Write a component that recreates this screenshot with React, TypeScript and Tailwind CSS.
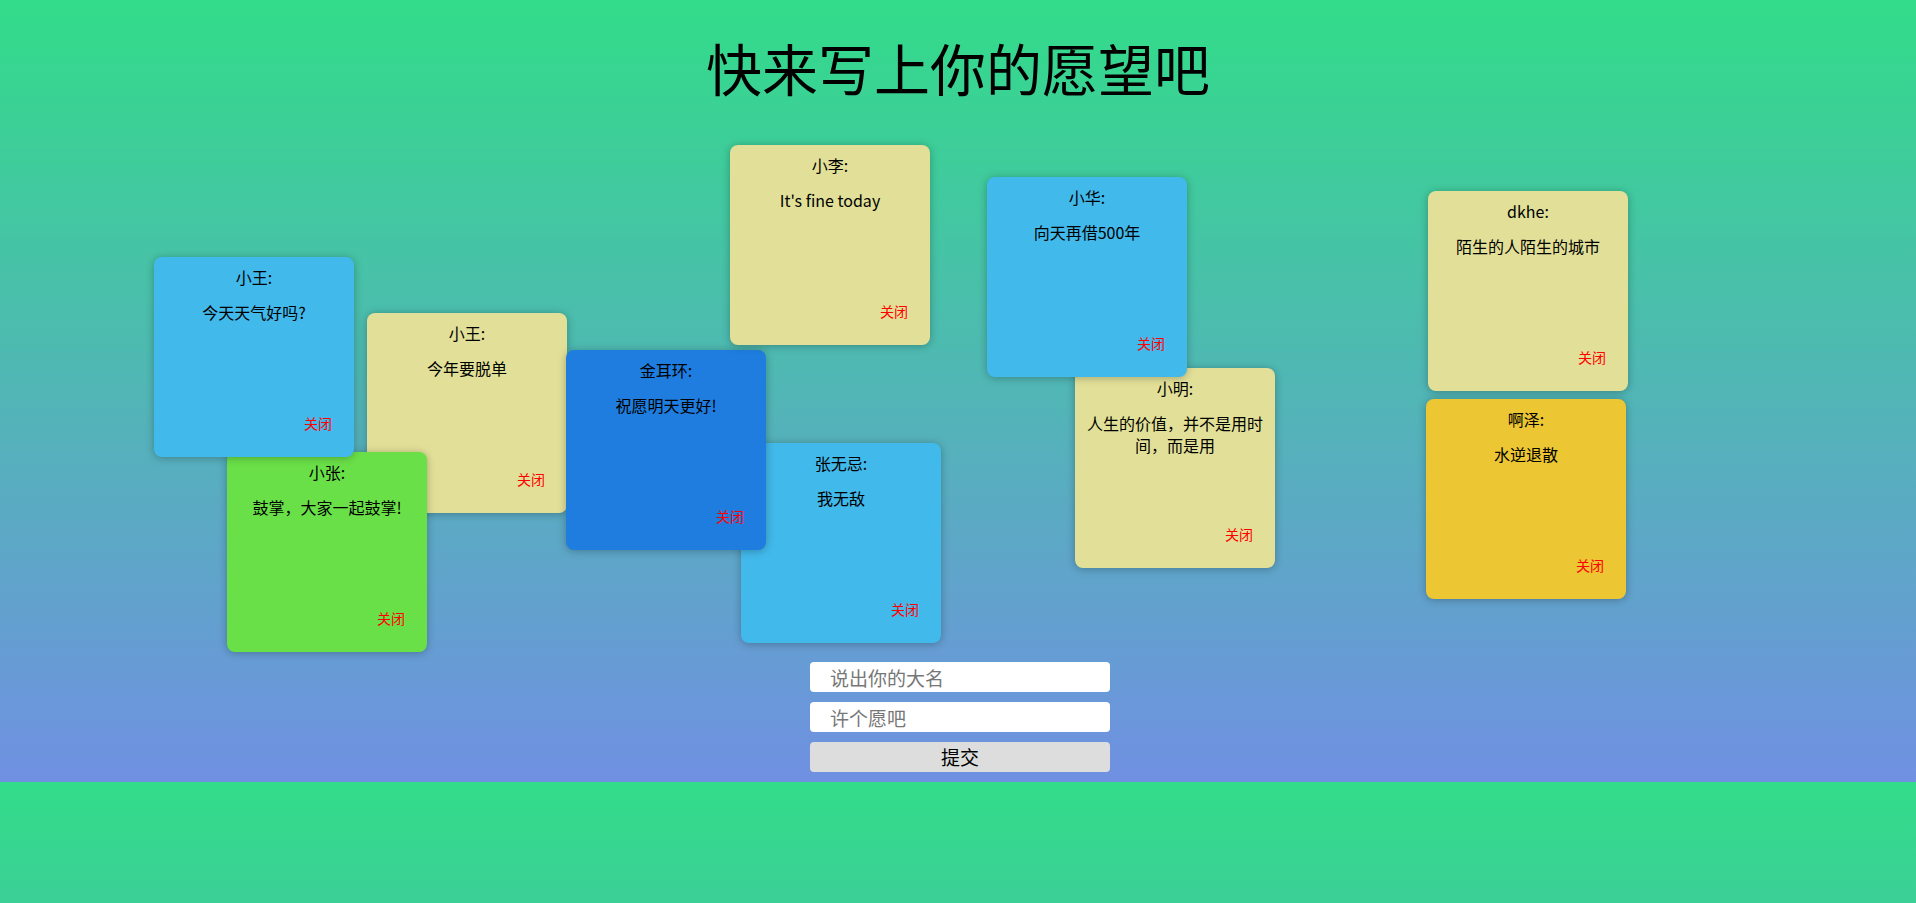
type Wish = {
  name: string;
  text: string;
  color: string;
  x: number;
  y: number;
};

// order matters: later notes sit on top of earlier ones
const wishes: Wish[] = [
  { name: "小王:", text: "今年要脱单", color: "bg-[#e2e098]", x: 367, y: 210 },
  { name: "小张:", text: "鼓掌，大家一起鼓掌!", color: "bg-[#6ae048]", x: 227, y: 349 },
  { name: "小王:", text: "今天天气好吗?", color: "bg-[#42b9eb]", x: 154, y: 154 },
  { name: "张无忌:", text: "我无敌", color: "bg-[#42b9eb]", x: 741, y: 340 },
  { name: "金耳环:", text: "祝愿明天更好!", color: "bg-[#1f7ddf]", x: 566, y: 247 },
  { name: "小明:", text: "人生的价值，并不是用时间，而是用", color: "bg-[#e2e098]", x: 1075, y: 265 },
  { name: "小华:", text: "向天再借500年", color: "bg-[#42b9eb]", x: 987, y: 74 },
  { name: "dkhe:", text: "陌生的人陌生的城市", color: "bg-[#e2e098]", x: 1428, y: 88 },
  { name: "啊泽:", text: "水逆退散", color: "bg-[#edc633]", x: 1426, y: 296 },
  { name: "小李:", text: "It's fine today", color: "bg-[#e2e098]", x: 730, y: 42 }
];

function WishCard({ wish }: { wish: Wish }) {
  return (
    <div
      className={`absolute flex h-[200px] w-[200px] flex-col rounded-[8px] px-[10px] pt-[9px] pb-[24px] text-center text-black shadow-[0_1px_8px_rgba(0,0,0,0.28)] ${wish.color}`}
      style={{ left: wish.x, top: wish.y }}
    >
      <p className="text-[16px] leading-[22px]">{wish.name}</p>
      <p className="mt-[13px] text-[16px] leading-[22px]">{wish.text}</p>
      <a className="mt-auto mr-[12px] cursor-pointer self-end text-[14px] leading-[20px] text-[#ff0000]">关闭</a>
    </div>
  );
}

export default function App() {
  return (
    <div
      className="min-h-screen bg-[linear-gradient(#32dc89,#7090e2)] bg-[length:100%_782px] bg-repeat-y"
      style={{ fontFamily: '"Noto Sans CJK SC", "Noto Sans", sans-serif' }}
    >
      <div className="h-[782px]">
        <h1 className="pt-[35px] pb-[4px] text-center text-[56px] leading-[64px] font-normal text-black">快来写上你的愿望吧</h1>

        <div className="relative h-[549px]">
          {wishes.map((w, i) => (
            <WishCard key={i} wish={w} />
          ))}
        </div>

        <div className="mt-[10px] flex justify-center pl-[4px]">
          <form className="flex w-[300px] flex-col gap-[10px]" onSubmit={(e) => e.preventDefault()}>
            <input
              type="text"
              placeholder="说出你的大名"
              className="h-[30px] rounded-[4px] bg-white pl-[20px] text-[19px] text-black outline-none placeholder:text-[#777777]"
            />
            <input
              type="text"
              placeholder="许个愿吧"
              className="h-[30px] rounded-[4px] bg-white pl-[20px] text-[19px] text-black outline-none placeholder:text-[#777777]"
            />
            <button type="submit" className="h-[30px] rounded-[4px] bg-[#dddddd] text-[19px] leading-[30px] text-black">
              提交
            </button>
          </form>
        </div>
      </div>
    </div>
  );
}
